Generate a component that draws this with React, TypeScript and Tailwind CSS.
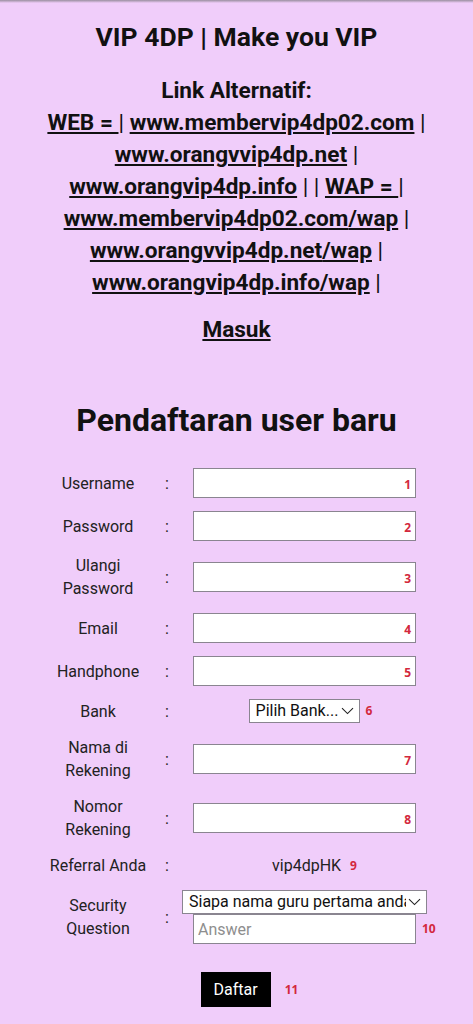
import React from 'react';

const webLinks = ['www.membervip4dp02.com', 'www.orangvvip4dp.net', 'www.orangvip4dp.info'];

const Badge: React.FC<{ n: number; className?: string }> = ({ n, className = '' }) => (
  <span className={`font-['Open_Sans',sans-serif] text-[12px] font-bold leading-none text-[#d3283d] ${className}`}>
    {n}
  </span>
);

const Chevron: React.FC = () => (
  <svg width="13" height="8" viewBox="0 0 13 8" fill="none" className="pointer-events-none absolute right-[6px] top-1/2 -translate-y-1/2">
    <path d="M1 1.2 6.5 6.6 12 1.2" stroke="#222" strokeWidth="1.1" />
  </svg>
);

const TextField: React.FC<{ n: number; type?: string; placeholder?: string }> = ({ n, type = 'text', placeholder }) => (
  <div className="relative mx-auto h-[30px] w-[223px]">
    <input
      type={type}
      placeholder={placeholder}
      className="h-full w-full border border-[#8a8590] bg-white px-[4px] text-[16px] outline-none placeholder:text-[#8e8e8e]"
    />
    <Badge n={n} className="absolute right-[5px] top-[11px]" />
  </div>
);

const Label: React.FC<{ children: React.ReactNode }> = ({ children }) => (
  <div className="text-center text-[16px] leading-[23px] text-[#222]">{children}</div>
);

const Colon: React.FC = () => <div className="pl-[13px] text-[16px] leading-[23px] text-[#222]">:</div>;

export default function App() {
  return (
    <div className="min-h-screen bg-[#f0cdfa] font-['Roboto',sans-serif] text-[#111]">
      <div className="h-[3px] bg-gradient-to-b from-[#9b8fa0] to-[#f0cdfa]" />

      {/* header + alternative links */}
      <h1 className="pt-[18px] text-center text-[26.5px] font-bold leading-[32px]">VIP 4DP | Make you VIP</h1>

      <div className="mt-[22px] text-center text-[22.6px] font-bold leading-[32px]">
        <div>Link Alternatif:</div>
        <div>
          <a href="#" className="underline">WEB = </a>
          <span className="font-normal">|</span>{' '}
          <a href="#" className="underline">{webLinks[0]}</a> <span className="font-normal">|</span>
          <br />
          <a href="#" className="underline">{webLinks[1]}</a> <span className="font-normal">|</span>
          <br />
          <a href="#" className="underline">{webLinks[2]}</a> <span className="font-normal">| |</span>{' '}
          <a href="#" className="underline">WAP = </a>
          <span className="font-normal">|</span>
          <br />
          <a href="#" className="underline">{webLinks[0]}/wap</a> <span className="font-normal">|</span>
          <br />
          <a href="#" className="underline">{webLinks[1]}/wap</a> <span className="font-normal">|</span>
          <br />
          <a href="#" className="underline">{webLinks[2]}/wap</a> <span className="font-normal">|</span>
        </div>
        <div className="mt-[15px]">
          <a href="#" className="underline">Masuk</a>
        </div>
      </div>

      {/* registration form */}
      <h2 className="mt-[54px] text-center text-[32px] font-bold leading-[40px]">Pendaftaran user baru</h2>

      <form className="mt-[28px] grid grid-cols-[108px_30px_245px] items-center gap-y-[13px] pl-[44px]">
        <Label>Username</Label>
        <Colon />
        <TextField n={1} />

        <Label>Password</Label>
        <Colon />
        <TextField n={2} type="password" />

        <Label>Ulangi Password</Label>
        <Colon />
        <TextField n={3} type="password" />

        <Label>Email</Label>
        <Colon />
        <TextField n={4} />

        <Label>Handphone</Label>
        <Colon />
        <TextField n={5} />

        <Label>Bank</Label>
        <Colon />
        <div className="flex items-center justify-center">
          <div className="relative ml-[12px] h-[24px] w-[111px]">
            <select className="h-full w-full appearance-none border border-[#8a8590] bg-white pl-[6px] text-[16px] leading-[22px] text-[#111] outline-none">
              <option>Pilih Bank...</option>
            </select>
            <Chevron />
          </div>
          <Badge n={6} className="ml-[6px]" />
        </div>

        <Label>Nama di Rekening</Label>
        <Colon />
        <TextField n={7} />

        <Label>Nomor Rekening</Label>
        <Colon />
        <TextField n={8} />

        <Label>Referral Anda</Label>
        <Colon />
        <div className="flex items-center justify-center pl-[20px] text-[16px] leading-[23px] text-[#222]">
          vip4dpHK
          <Badge n={9} className="ml-[9px]" />
        </div>

        <Label>Security Question</Label>
        <Colon />
        <div>
          <div className="relative h-[24px] w-[245px]">
            <select className="h-full w-full appearance-none overflow-hidden border border-[#8a8590] bg-white pl-[6px] pr-[20px] text-[16px] leading-[22px] text-[#111] outline-none">
              <option>Siapa nama guru pertama anda?</option>
            </select>
            <Chevron />
          </div>
          <div className="flex w-[260px] items-center">
            <input
              placeholder="Answer"
              className="ml-[11px] h-[30px] w-[223px] shrink-0 border border-[#8a8590] bg-white px-[4px] text-[16px] outline-none placeholder:text-[#8e8e8e]"
            />
            <Badge n={10} className="ml-[6px]" />
          </div>
        </div>
      </form>

      <div className="mt-[28px] flex items-center justify-center pb-[16px] pl-[26px]">
        <button type="button" className="h-[35px] w-[70px] bg-black text-[16px] text-white">
          Daftar
        </button>
        <Badge n={11} className="ml-[14px]" />
      </div>
    </div>
  );
}
